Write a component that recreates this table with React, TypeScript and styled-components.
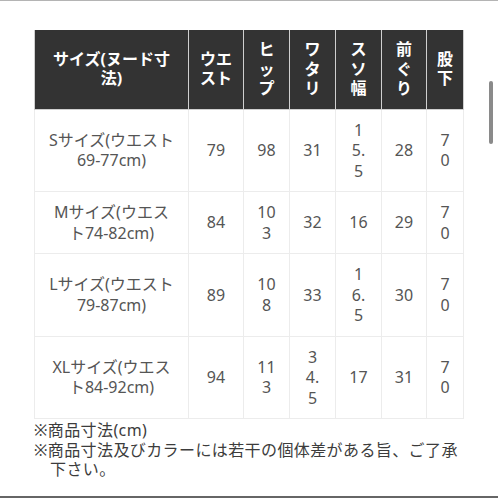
import React from 'react';
import styled, { createGlobalStyle } from 'styled-components';

const GlobalStyle = createGlobalStyle`
  html, body {
    margin: 0;
    padding: 0;
    background: #ffffff;
  }
  body {
    font-family: 'Noto Sans', 'Noto Sans CJK JP', sans-serif;
  }
`;

const Page = styled.div`
  position: relative;
  width: 498px;
  height: 498px;
  box-sizing: border-box;
  border-top: 1px solid #b4b4b4;
  border-bottom: 2px solid #666666;
  background: #ffffff;
  padding: 29px 35px 0 34px;
  overflow: hidden;
`;

const ScrollThumb = styled.div`
  position: absolute;
  left: 489px;
  top: 80px;
  width: 4px;
  height: 63px;
  border-radius: 2px;
  background: #8a8a8a;
`;

const SizeTable = styled.table`
  width: 429px;
  table-layout: fixed;
  border-collapse: collapse;
  font-family: 'Noto Sans', 'Noto Sans CJK JP', sans-serif;
`;

const HeadCell = styled.th`
  background: #333333;
  color: #ffffff;
  font-size: 16px;
  font-weight: 700;
  line-height: 19.5px;
  padding: 10px 0;
  text-align: center;
  vertical-align: middle;
  border: 1px solid #cfcfcf;
  border-top: none;
`;

const BodyCell = styled.td`
  color: #555555;
  font-size: 16px;
  line-height: 20.5px;
  padding: 10px 0;
  text-align: center;
  vertical-align: middle;
  border: 1px solid #ececec;
`;

const Notes = styled.div`
  margin-top: 2px;
  color: #3c3c3c;
  font-size: 16px;
  letter-spacing: 0.4px;
  line-height: 19.5px;
`;

const Note = styled.p`
  margin: 0;
  padding-left: 1em;
  text-indent: -1em;
`;

const widths = [154, 55, 46, 46, 46, 45, 37];

const headers: string[][] = [
  ['サイズ(ヌード寸', '法)'],
  ['ウエ', 'スト'],
  ['ヒ', 'ッ', 'プ'],
  ['ワ', 'タ', 'リ'],
  ['ス', 'ソ', '幅'],
  ['前', 'ぐ', 'り'],
  ['股', '下'],
];

const rows: string[][][] = [
  [['Sサイズ(ウエスト', '69-77cm)'], ['79'], ['98'], ['31'], ['1', '5.', '5'], ['28'], ['7', '0']],
  [['Mサイズ(ウエス', 'ト74-82cm)'], ['84'], ['10', '3'], ['32'], ['16'], ['29'], ['7', '0']],
  [['Lサイズ(ウエスト', '79-87cm)'], ['89'], ['10', '8'], ['33'], ['1', '6.', '5'], ['30'], ['7', '0']],
  [['XLサイズ(ウエス', 'ト84-92cm)'], ['94'], ['11', '3'], ['3', '4.', '5'], ['17'], ['31'], ['7', '0']],
];

const Lines: React.FC<{ lines: string[] }> = ({ lines }) => (
  <>
    {lines.map((l, i) => (
      <React.Fragment key={i}>
        {i > 0 && <br />}
        {l}
      </React.Fragment>
    ))}
  </>
);

export default function App() {
  return (
    <>
      <GlobalStyle />
      <Page>
        <SizeTable>
          <colgroup>
            {widths.map((w, i) => (
              <col key={i} style={{ width: w }} />
            ))}
          </colgroup>
          <thead>
            <tr>
              {headers.map((h, i) => (
                <HeadCell key={i}>
                  <Lines lines={h} />
                </HeadCell>
              ))}
            </tr>
          </thead>
          <tbody>
            {rows.map((r, ri) => (
              <tr key={ri}>
                {r.map((c, ci) => (
                  <BodyCell key={ci}>
                    <Lines lines={c} />
                  </BodyCell>
                ))}
              </tr>
            ))}
          </tbody>
        </SizeTable>
        <Notes>
          <Note>※商品寸法(cm)</Note>
          <Note>※商品寸法及びカラーには若干の個体差がある旨、ご了承下さい。</Note>
        </Notes>
        <ScrollThumb />
      </Page>
    </>
  );
}
